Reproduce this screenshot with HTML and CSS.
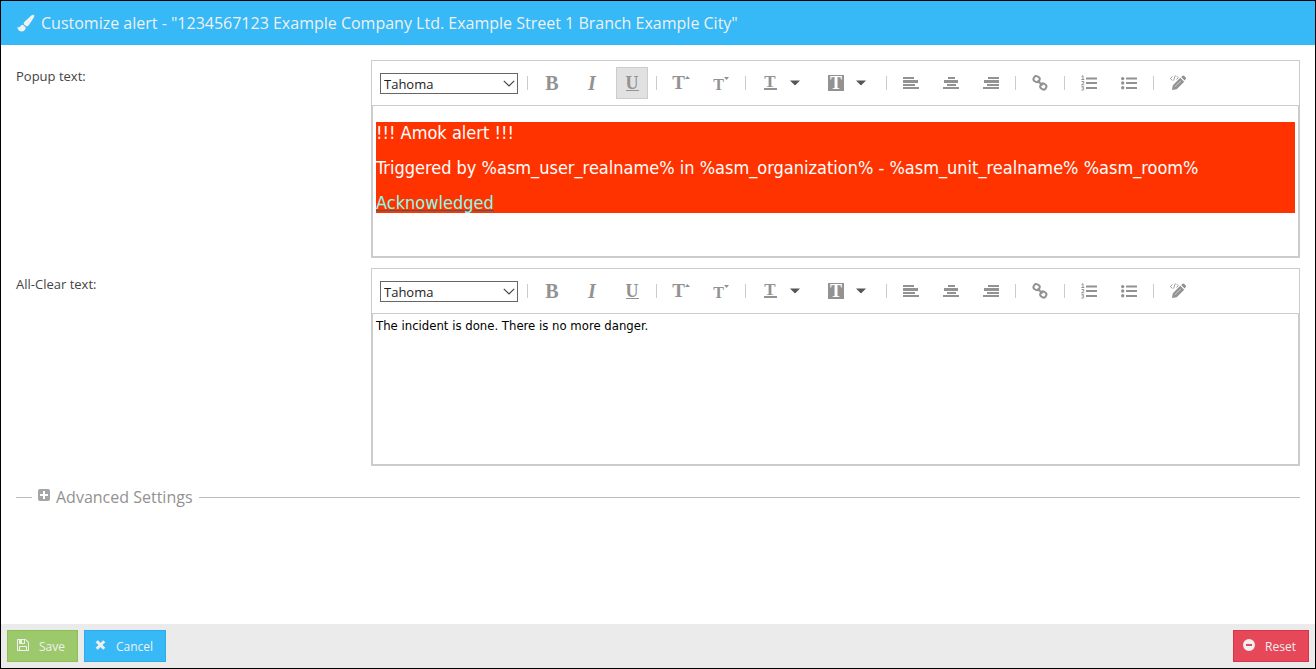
FILE: index.html
```html
<!DOCTYPE html>
<html lang="en">
<head>
<meta charset="utf-8">
<title>Customize alert</title>
<link rel="stylesheet" href="styles.css">
</head>
<body>
<svg class="defs" aria-hidden="true">
  <symbol id="chevron" viewBox="0 0 12 7"><path d="M.8.8 6 6 11.2.8" fill="none" stroke="currentColor" stroke-width="1.2"/></symbol>
  <symbol id="caret" viewBox="0 0 10 6"><path d="M0 .5h10L5 5.5z"/></symbol>
  <symbol id="tri-up" viewBox="0 0 5 3"><path d="M0 3h5L2.500 0z"/></symbol>
  <symbol id="tri-down" viewBox="0 0 5 3"><path d="M0 0h5L2.500 3z"/></symbol>
  <symbol id="left" viewBox="0 0 16 14"><path d="M0 1h11v2H0zM0 4h15v3H0zM0 8h12v2H0zM0 11h16v2H0z"/></symbol>
  <symbol id="center" viewBox="0 0 16 14"><path d="M5 1h7v2H5zM1 4h14v3H1zM4 8h9v2H4zM0 11h16v2H0z"/></symbol>
  <symbol id="right" viewBox="0 0 16 14"><path d="M5 1h11v2H5zM1 4h15v3H1zM4 8h12v2H4zM0 11h16v2H0z"/></symbol>
  <symbol id="link" viewBox="0 0 16 16"><g fill="none" stroke="currentColor" stroke-width="2"><rect x="1.500" y="1.300" width="6" height="5.600" rx="2.600" transform="rotate(30 4.500 4.300)"/><rect x="8.300" y="8.700" width="6" height="5.600" rx="2.600" transform="rotate(30 11.300 11.500)"/><path d="m5.500 5.500 5 5"/></g></symbol>
  <symbol id="ordered" viewBox="0 0 16 16"><path d="M5 2.500h11v2H5zM5 7h11v2H5zM5 12h11v2H5z"/><path d="M.5 1.500 2 .7v3.800M.4 4.500h3M.5 6.500h2.300v1.500L.6 9.800h2.600M.4 11.800h2.400L1.600 13.200q1.500 0 1.300 1.200-.4 1.200-2.500.6" fill="none" stroke="currentColor"/></symbol>
  <symbol id="bullets" viewBox="0 0 16 16"><path d="M5 2.500h11v2H5zM5 7h11v2H5zM5 12h11v2H5z"/><circle cx="1.700" cy="3.600" r="1.700"/><circle cx="1.700" cy="8" r="1.700"/><circle cx="1.700" cy="12.800" r="1.700"/></symbol>
  <symbol id="source" viewBox="0 0 16 16"><path d="m2 15 .8-4.700L10.300 2.800l3.900 3.900L6.700 14.200zM11.200 2 12.600.7q.8-.5 1.400 0l1.800 1.800q.5.800 0 1.400l-1.200 1.500z"/><path d="m4.800 11.800 6-6" stroke="#fff" stroke-width=".6" fill="none"/><path d="M2.300 1.500.5 3.500l1.800 2M6.600 1l1.600 1.700-1.600 1.800M5.300.3 3.600 5.500" fill="none" stroke="currentColor" stroke-width=".9"/></symbol>
  <symbol id="brush" viewBox="0 0 18 18"><path d="M16.700.8c1 .5.600 1.700.1 2.700L12.300 10.600c-.8 1.400-1.900 2-3.100 1.700L6.700 10.200c-.1-1.300.5-2.400 1.600-3.300l6-5.500c.7-.6 1.600-1 2.400-.6zM5.800 10.700l2.900 2.500c.1 2.500-1.500 4.200-4.200 4.200C2 17.400.5 15.500.4 12.700c.8.500 1.600.9 2.300.4.700-1.500 1.600-2.300 3.100-2.400z"/></symbol>
  <symbol id="save" viewBox="0 128 1536 1536"><path d="M384 1536h768v-384h-768v384zm896 0h128v-896q0-14-10-38.500t-20-34.500l-281-281q-10-10-34-20t-39-10v416q0 40-28 68t-68 28h-576q-40 0-68-28t-28-68v-416h-128v1280h128v-416q0-40 28-68t68-28h832q40 0 68 28t28 68v416zm-384-928v-320q0-13-9.500-22.500t-22.500-9.500h-192q-13 0-22.500 9.500t-9.500 22.500v320q0 13 9.500 22.500t22.500 9.500h192q13 0 22.500-9.500t9.500-22.500zm640 32v928q0 40-28 68t-68 28h-1344q-40 0-68-28t-28-68v-1344q0-40 28-68t68-28h928q40 0 88 20t76 48l280 280q28 28 48 76t20 88z"/></symbol>
  <symbol id="cross" viewBox="0 0 12 12"><path d="m3.800 3.300 5.400 5.400m0-5.400-5.400 5.400" stroke="currentColor" stroke-width="3" stroke-linecap="square"/></symbol>
  <symbol id="minus" viewBox="0 0 12 12"><path fill-rule="evenodd" d="M6 0a6 6 0 1 1 0 12A6 6 0 0 1 6 0zM3 5v2h6V5z"/></symbol>
  <symbol id="plus" viewBox="0 0 12 12"><path fill-rule="evenodd" d="M2 0h8q2 0 2 2v8q0 2-2 2H2q-2 0-2-2V2q0-2 2-2zm3 2v3H2v2h3v3h2V7h3V5H7V2z"/></symbol>
</svg>
<div class="dialog">
  <header class="titlebar">
    <svg class="icon-lg"><use href="#brush"/></svg>
    <h1 class="title">Customize alert - "1234567123 Example Company Ltd. Example Street 1 Branch Example City"</h1>
  </header>
  <main class="content">
    <div class="field">
      <label class="label" for="popup-font">Popup text:</label>
      <section class="editor">
        <div class="toolbar">
          <div class="font-picker">
            <select class="font-select" id="popup-font"><option>Tahoma</option></select>
            <svg class="chevron"><use href="#chevron"/></svg>
          </div>
          <span class="sep"></span>
          <button class="tool glyph" aria-label="Bold"><b>B</b></button>
          <button class="tool glyph" aria-label="Italic"><i>I</i></button>
          <button class="tool glyph active" aria-label="Underline"><span class="under">U</span></button>
          <span class="sep"></span>
          <button class="tool glyph sized" aria-label="Increase size">T<svg class="tri"><use href="#tri-up"/></svg></button>
          <button class="tool glyph sized smaller" aria-label="Decrease size">T<svg class="tri"><use href="#tri-down"/></svg></button>
          <span class="sep"></span>
          <div class="split">
            <button class="tool glyph" aria-label="Text color"><span class="colored">T</span></button>
            <button class="drop" aria-label="Choose text color"><svg class="caret"><use href="#caret"/></svg></button>
          </div>
          <div class="split">
            <button class="tool glyph" aria-label="Background color"><span class="filled">T</span></button>
            <button class="drop" aria-label="Choose background color"><svg class="caret"><use href="#caret"/></svg></button>
          </div>
          <span class="sep"></span>
          <button class="tool" aria-label="Align left"><svg class="align"><use href="#left"/></svg></button>
          <button class="tool" aria-label="Align center"><svg class="align"><use href="#center"/></svg></button>
          <button class="tool" aria-label="Align right"><svg class="align"><use href="#right"/></svg></button>
          <span class="sep"></span>
          <button class="tool" aria-label="Link"><svg class="icon"><use href="#link"/></svg></button>
          <span class="sep"></span>
          <button class="tool" aria-label="Numbered list"><svg class="icon"><use href="#ordered"/></svg></button>
          <button class="tool" aria-label="Bulleted list"><svg class="icon"><use href="#bullets"/></svg></button>
          <span class="sep"></span>
          <button class="tool" aria-label="Edit source"><svg class="icon"><use href="#source"/></svg></button>
        </div>
        <div class="page popup-page" contenteditable="true" role="textbox" aria-label="Popup text" spellcheck="false">
          <div class="alert">
            <p class="alert-line">!!! Amok alert !!!</p>
            <p class="alert-line">Triggered by %asm_user_realname% in %asm_organization% - %asm_unit_realname% %asm_room%</p>
            <p class="alert-line"><a class="ack" href="#">Acknowledged</a></p>
          </div>
        </div>
      </section>
    </div>
    <div class="field">
      <label class="label" for="clear-font">All-Clear text:</label>
      <section class="editor">
        <div class="toolbar">
          <div class="font-picker">
            <select class="font-select" id="clear-font"><option>Tahoma</option></select>
            <svg class="chevron"><use href="#chevron"/></svg>
          </div>
          <span class="sep"></span>
          <button class="tool glyph" aria-label="Bold"><b>B</b></button>
          <button class="tool glyph" aria-label="Italic"><i>I</i></button>
          <button class="tool glyph" aria-label="Underline"><span class="under">U</span></button>
          <span class="sep"></span>
          <button class="tool glyph sized" aria-label="Increase size">T<svg class="tri"><use href="#tri-up"/></svg></button>
          <button class="tool glyph sized smaller" aria-label="Decrease size">T<svg class="tri"><use href="#tri-down"/></svg></button>
          <span class="sep"></span>
          <div class="split">
            <button class="tool glyph" aria-label="Text color"><span class="colored">T</span></button>
            <button class="drop" aria-label="Choose text color"><svg class="caret"><use href="#caret"/></svg></button>
          </div>
          <div class="split">
            <button class="tool glyph" aria-label="Background color"><span class="filled">T</span></button>
            <button class="drop" aria-label="Choose background color"><svg class="caret"><use href="#caret"/></svg></button>
          </div>
          <span class="sep"></span>
          <button class="tool" aria-label="Align left"><svg class="align"><use href="#left"/></svg></button>
          <button class="tool" aria-label="Align center"><svg class="align"><use href="#center"/></svg></button>
          <button class="tool" aria-label="Align right"><svg class="align"><use href="#right"/></svg></button>
          <span class="sep"></span>
          <button class="tool" aria-label="Link"><svg class="icon"><use href="#link"/></svg></button>
          <span class="sep"></span>
          <button class="tool" aria-label="Numbered list"><svg class="icon"><use href="#ordered"/></svg></button>
          <button class="tool" aria-label="Bulleted list"><svg class="icon"><use href="#bullets"/></svg></button>
          <span class="sep"></span>
          <button class="tool" aria-label="Edit source"><svg class="icon"><use href="#source"/></svg></button>
        </div>
        <div class="page" contenteditable="true" role="textbox" aria-label="All-Clear text" spellcheck="false">The incident is done. There is no more danger.</div>
      </section>
    </div>
    <div class="advanced">
      <button class="advanced-toggle" aria-expanded="false"><svg class="icon-sm"><use href="#plus"/></svg>Advanced Settings</button>
    </div>
  </main>
  <footer class="footer">
    <button class="btn save"><svg class="icon-sm"><use href="#save"/></svg>Save</button>
    <button class="btn cancel"><svg class="icon-sm"><use href="#cross"/></svg>Cancel</button>
    <button class="btn reset"><svg class="icon-sm"><use href="#minus"/></svg>Reset</button>
  </footer>
</div>
</body>
</html>
```
FILE: styles.css
```css
* { box-sizing: border-box; }
body { margin: 0; font: 13px/18px "Open Sans", sans-serif; color: #444; background: #fff; }
button { margin: 0; padding: 0; border: 0; background: none; font: inherit; color: inherit; }
svg { display: block; flex: none; fill: currentColor; }
.defs { display: none; }

.dialog { display: flex; flex-direction: column; min-height: 100vh; border: 1px solid #000; }
.titlebar { display: flex; align-items: center; gap: 6px; padding: 11px 16px; background: #36b9f6; color: #f0f0f0; }
.title { margin: 0; font-size: 16px; line-height: 22px; font-weight: 400; }
.icon-lg { width: 18px; height: 18px; }
.icon { width: 16px; height: 16px; }
.icon-sm { width: 12px; height: 12px; margin-bottom: 4px; }
.align { width: 16px; height: 14px; }

.content { flex: 1; display: flex; flex-direction: column; gap: 10px; padding: 15px; }
.field { display: flex; }
.label { flex: none; width: 355px; padding-top: 7px; }
.editor { flex: 1; min-width: 0; border: 1px solid #ccc; }

.toolbar { display: flex; align-items: center; gap: 8px; padding: 6px 8px; color: #929292; }
.font-picker { position: relative; width: 138px; margin-right: 1px; }
.font-select { display: block; appearance: none; width: 100%; height: 21px; padding: 1px 3px 0; border: 1px solid #666; border-radius: 0; background: #fff; color: #222; font: 13px/18px "Open Sans", sans-serif; }
.chevron { position: absolute; right: 3px; top: 7px; width: 12px; height: 7px; color: #444; pointer-events: none; }
.sep { width: 1px; height: 14px; background: #ccc; }
.tool { display: flex; align-items: center; justify-content: center; width: 32px; height: 32px; }
.glyph { font: bold 20px/20px "Liberation Serif", serif; }
.active { border: 1px solid #ccc; background: #e1e1e1; }
.under { font-size: 18px; line-height: 14px; border-bottom: 1px solid currentColor; }
.sized { font-size: 19px; }
.smaller { padding-top: 3px; font-size: 16px; }
.tri { width: 5px; height: 3px; margin-bottom: 12px; }
.colored { width: 13px; font-size: 17px; line-height: 12px; border-bottom: 2px solid currentColor; }
.filled { width: 16px; height: 16px; line-height: 16px; font-size: 18px; background: #929292; color: #fff; }
.split { display: flex; padding-right: 8px; }
.drop { display: flex; align-items: center; justify-content: center; width: 18px; color: #555; }
.caret { width: 10px; height: 6px; }

.page { min-height: 152px; padding: 3px; border: 1px solid #ccc; font: 13px/18px "DejaVu Sans Condensed", "DejaVu Sans", sans-serif; color: #000; }
.popup-page { padding-top: 16px; }
.alert { display: flex; flex-direction: column; gap: 14px; background: #f30; color: #fff; font-size: 18px; line-height: 21px; }
.alert-line { margin: 0; }
.ack { color: #7ffff0; text-decoration: underline #555; text-decoration-thickness: 1px; }

.advanced { display: flex; align-items: center; gap: 6px; margin-top: 10px; color: #929292; }
.advanced::before, .advanced::after { content: ""; height: 1px; background: #bbb; }
.advanced::before { width: 16px; }
.advanced::after { flex: 1; }
.advanced-toggle { display: flex; align-items: center; gap: 6px; font-size: 16px; line-height: 22px; }
.advanced-toggle .icon-sm { color: #a5a5a5; }

.footer { display: flex; gap: 6px; padding: 6px; background: #ebebeb; }
.btn { display: flex; align-items: center; gap: 10px; height: 32px; padding: 1px 12px 0 9px; border: 1px solid; color: #f0f0f0; font-size: 12px; }
.save { background: #9cc96b; border-color: #8cc152; }
.cancel { background: #36b9f6; border-color: #2fa9e8; }
.reset { margin-left: auto; background: #e64759; border-color: #da3449; }
```
